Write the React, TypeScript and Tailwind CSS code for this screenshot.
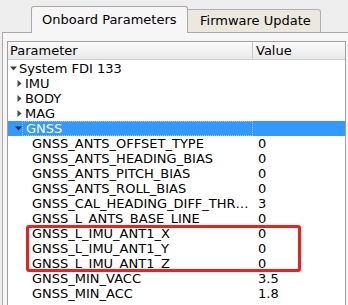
const groups = ["IMU", "BODY", "MAG"];

const params = [
  { name: "GNSS_ANTS_OFFSET_TYPE", value: "0" },
  { name: "GNSS_ANTS_HEADING_BIAS", value: "0" },
  { name: "GNSS_ANTS_PITCH_BIAS", value: "0" },
  { name: "GNSS_ANTS_ROLL_BIAS", value: "0" },
  { name: "GNSS_CAL_HEADING_DIFF_THR…", value: "3" },
  { name: "GNSS_L_ANTS_BASE_LINE", value: "0" },
  { name: "GNSS_L_IMU_ANT1_X", value: "0" },
  { name: "GNSS_L_IMU_ANT1_Y", value: "0" },
  { name: "GNSS_L_IMU_ANT1_Z", value: "0" },
  { name: "GNSS_MIN_VACC", value: "3.5" },
  { name: "GNSS_MIN_ACC", value: "1.8" },
];

function Down({ color = "#3c3c3c" }: { color?: string }) {
  return (
    <svg width="7" height="5" viewBox="0 0 7 5">
      <path d="M0 0.5 L7 0.5 L3.5 4.5 Z" fill={color} />
    </svg>
  );
}

function Right() {
  return (
    <svg width="5" height="7" viewBox="0 0 5 7">
      <path d="M0.5 0 L4.5 3.5 L0.5 7 Z" fill="#4a4a4a" />
    </svg>
  );
}

export default function App() {
  return (
    <div
      className="relative w-[348px] h-[305px] overflow-hidden bg-[#eeeeee] text-[13px] text-black"
      style={{ fontFamily: '"DejaVu Sans", Verdana, sans-serif' }}
    >
      {/* tabs */}
      <div className="flex items-end h-[32px] pl-[31px]">
        <div className="relative z-10 -mb-px h-[27px] w-[157px] rounded-t-[3px] border border-b-0 border-[#a9a9a9] bg-[#f6f6f6] pl-[10px] pt-[5px] leading-[16px]">
          Onboard Parameters
        </div>
        <div className="h-[23px] w-[133px] rounded-tr-[3px] border border-l-0 border-b-0 border-[#b0b0b0] bg-[#ebe9de] pl-[12px] pt-[3px] leading-[16px]">
          Firmware Update
        </div>
      </div>

      {/* pane */}
      <div className="ml-[2px] h-[280px] border-t border-l border-[#a9a9a9] bg-[#f6f6f6] pt-[8px] pl-[4px]">
        <div className="w-[339px] h-[280px] border border-[#a0a0a0] bg-white">
          {/* header */}
          <div className="flex h-[18px] border-b border-[#d0d0d0] bg-gradient-to-b from-[#fbfbfb] to-[#e9e9e9] leading-[17px]">
            <div className="w-[245px] border-r border-[#c8c8c8] pl-[2px]">Parameter</div>
            <div className="pl-[3px]">Value</div>
          </div>

          {/* rows */}
          <div className="pt-[1px] leading-[15px]">
            <div className="flex h-[15px] items-center">
              <div className="w-[10px] pl-[2px] flex items-center">
                <Down />
              </div>
              <span className="pl-[1px]">System FDI 133</span>
            </div>

            {groups.map((g) => (
              <div key={g} className="flex h-[15px] items-center">
                <div className="w-[17px] pl-[9px] flex items-center">
                  <Right />
                </div>
                <span>{g}</span>
              </div>
            ))}

            <div className="flex h-[15px] items-center bg-[#3399ff] text-white">
              <div className="w-[14px] pl-[7px] flex items-center">
                <Down color="#1f2a40" />
              </div>
              <div className="w-[231px] h-[15px] border border-dotted border-[#9cc8f5] pl-[3px] leading-[13px]">
                GNSS
              </div>
            </div>

            {params.map((p) => (
              <div key={p.name} className="flex h-[15px] items-center">
                <div className="w-[245px] pl-[24px] whitespace-nowrap overflow-hidden">{p.name}</div>
                <div className="pl-[5px]">{p.value}</div>
              </div>
            ))}
          </div>
        </div>
      </div>

      {/* highlight box */}
      <div className="absolute left-[26px] top-[225px] w-[275px] h-[47px] rounded-[3px] border-[3px] border-[#f21d1d]" />
    </div>
  );
}
